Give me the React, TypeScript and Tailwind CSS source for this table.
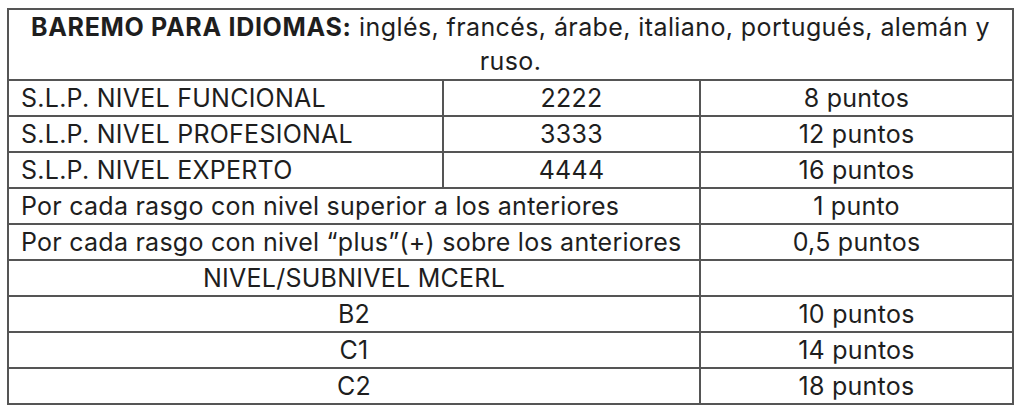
import React from "react";

const rows: { a: string; b?: string; c: string; span?: boolean }[] = [
  { a: "S.L.P. NIVEL FUNCIONAL", b: "2222", c: "8 puntos" },
  { a: "S.L.P. NIVEL PROFESIONAL", b: "3333", c: "12 puntos" },
  { a: "S.L.P. NIVEL EXPERTO", b: "4444", c: "16 puntos" },
  { a: "Por cada rasgo con nivel superior a los anteriores", c: "1 punto", span: true },
  { a: "Por cada rasgo con nivel \u201cplus\u201d(+) sobre los anteriores", c: "0,5 puntos", span: true },
  { a: "NIVEL/SUBNIVEL MCERL", c: "", span: true },
  { a: "B2", c: "10 puntos", span: true },
  { a: "C1", c: "14 puntos", span: true },
  { a: "C2", c: "18 puntos", span: true },
];

export default function App() {
  return (
    <div className="w-[1024px] h-[408px] bg-white pl-[7px] pt-[8px] font-['Inter',sans-serif] text-[25px] tracking-[0.25px] text-[#1e1e1e]">
      <table className="w-[1005px] table-fixed border-collapse">
        <colgroup>
          <col className="w-[435px]" />
          <col className="w-[257px]" />
          <col className="w-[313px]" />
        </colgroup>
        <tbody>
          <tr className="h-[71px]">
            <td colSpan={3} className="border-2 border-[#555] text-center leading-[34px] px-[12px] align-top pt-0 tracking-[0.4px]">
              <span className="font-bold tracking-[0.7px]">BAREMO PARA IDIOMAS:</span> inglés, francés, árabe, italiano, portugués, alemán y ruso.
            </td>
          </tr>
          {rows.map((r, i) => (
            <tr key={i} className="h-[36px]">
              {r.span ? (
                <td
                  colSpan={2}
                  className={`border-2 border-[#555] leading-none ${
                    i < 5 ? "text-left pl-[12px]" : "text-center"
                  }`}
                >
                  {r.a}
                </td>
              ) : (
                <>
                  <td className="border-2 border-[#555] leading-none pl-[12px]">{r.a}</td>
                  <td className="border-2 border-[#555] leading-none text-center">{r.b}</td>
                </>
              )}
              <td className="border-2 border-[#555] leading-none text-center">{r.c}</td>
            </tr>
          ))}
        </tbody>
      </table>
    </div>
  );
}
